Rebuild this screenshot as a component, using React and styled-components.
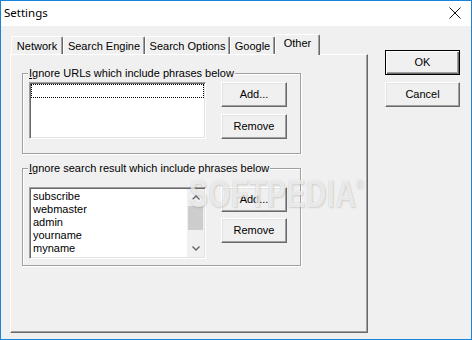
import React from "react";
import styled, { createGlobalStyle } from "styled-components";

const GlobalStyle = createGlobalStyle`
  html, body { margin: 0; padding: 0; background: #f0f0f0; }
  * { box-sizing: border-box; }
`;

const Window = styled.div`
  position: relative;
  width: 472px;
  height: 340px;
  border: 1px solid #1883d7;
  background: #f0f0f0;
  display: flex;
  flex-direction: column;
  font-family: "Liberation Sans", Arial, sans-serif;
  font-size: 11px;
  color: #000;
  overflow: hidden;
`;

const TitleBar = styled.div`
  height: 25px;
  flex: none;
  background: #fff;
  display: flex;
  align-items: center;
  justify-content: space-between;
  padding: 0 10px 0 3px;
`;

const Title = styled.span`
  font-family: "Noto Sans", "Liberation Sans", sans-serif;
  font-size: 11.5px;
  line-height: 16px;
  margin-top: -1px;
`;

const CloseIcon = styled.svg`
  width: 12px;
  height: 12px;
  display: block;
  margin-top: -2px;
`;

const Body = styled.div`
  flex: 1;
  display: flex;
  gap: 17px;
  padding: 8px 0 0 9px;
`;

const TabControl = styled.div`
  width: 358px;
  height: 299px;
  display: flex;
  flex-direction: column;
`;

const TabStrip = styled.div`
  height: 20px;
  flex: none;
  display: flex;
  align-items: flex-end;
  padding-left: 1px;
`;

const Tab = styled.div`
  position: relative;
  z-index: ${(p) => (p.$active ? 2 : 1)};
  width: ${(p) => p.$w}px;
  height: ${(p) => (p.$active ? 21 : 18)}px;
  margin-bottom: ${(p) => (p.$active ? -1 : 0)}px;
  background: #f0f0f0;
  border-top: 1px solid #fff;
  border-left: 1px solid #fff;
  border-right: 1px solid #696969;
  box-shadow: inset -1px 0 0 #a0a0a0;
  border-radius: 2px 2px 0 0;
  display: flex;
  align-items: flex-start;
  justify-content: center;
  padding-top: ${(p) => (p.$active ? 2 : 3)}px;
  line-height: 13px;
  white-space: nowrap;
`;

const Panel = styled.div`
  flex: 1;
  border-style: solid;
  border-width: 1px;
  border-color: #fff #696969 #696969 #fff;
  box-shadow: inset -1px -1px 0 #a0a0a0;
  display: flex;
  flex-direction: column;
  align-items: flex-start;
  padding: 18px 0 0 11px;
`;

const GroupBox = styled.div`
  position: relative;
  width: 279px;
  height: ${(p) => p.$h}px;
  margin-top: ${(p) => p.$mt || 0}px;
  border: 1px solid #a0a0a0;
  box-shadow: 1px 1px 0 #fff, inset 1px 1px 0 #fff;
  display: flex;
  align-items: flex-start;
  padding: ${(p) => p.$pt}px 0 0 6px;
`;

const Legend = styled.span`
  position: absolute;
  top: -7px;
  left: 5px;
  padding: 0 1px;
  line-height: 13px;
  background: #f0f0f0;
  white-space: nowrap;
`;

const Mnemonic = styled.span`
  text-decoration: underline;
  text-underline-offset: 1px;
`;

const ListBox = styled.div`
  width: 177px;
  height: ${(p) => p.$h}px;
  flex: none;
  background: #fff;
  border-style: solid;
  border-width: 1px;
  border-color: #a0a0a0 #fff #fff #a0a0a0;
  box-shadow: inset 1px 1px 0 #696969, inset -1px -1px 0 #e3e3e3;
  padding: 1px;
  display: flex;
`;

const FocusRow = styled.div`
  width: 173px;
  height: 14px;
  border: 1px dotted #000;
`;

const Items = styled.div`
  flex: 1;
  padding: 1px 0 0 2px;
`;

const Item = styled.div`
  height: 13px;
  line-height: 13px;
  white-space: nowrap;
`;

const ScrollBar = styled.div`
  width: 17px;
  flex: none;
  background: #f0f0f0;
  display: flex;
  flex-direction: column;
`;

const ScrollArrow = styled.div`
  height: 17px;
  flex: none;
  display: flex;
  align-items: center;
  justify-content: center;
`;

const Thumb = styled.div`
  height: 24px;
  margin: 0 1px;
  flex: none;
  background: #cdcdcd;
`;

const Track = styled.div`
  flex: 1;
`;

const ButtonColumn = styled.div`
  display: flex;
  flex-direction: column;
  gap: ${(p) => p.$gap}px;
  margin-left: ${(p) => p.$ml || 0}px;
  padding-top: ${(p) => p.$pt || 0}px;
`;

const Button = styled.div`
  width: ${(p) => p.$w}px;
  height: 25px;
  background: #f0f0f0;
  border: 1px solid;
  border-color: ${(p) =>
    p.$default ? "#000" : "#fff #696969 #696969 #fff"};
  box-shadow: ${(p) =>
    p.$default
      ? "inset 1px 1px 0 #fff, inset -1px -1px 0 #696969, inset -2px -2px 0 #a0a0a0"
      : "inset -1px -1px 0 #a0a0a0, inset 1px 1px 0 #e3e3e3"};
  display: flex;
  align-items: center;
  justify-content: center;
  line-height: 13px;
  padding-bottom: 1px;
`;

const Watermark = styled.div`
  position: absolute;
  left: 188px;
  top: 172px;
  font-family: "Liberation Sans", Arial, sans-serif;
  font-weight: bold;
  font-size: 38px;
  letter-spacing: 1px;
  color: rgba(255, 255, 255, 0.72);
  text-shadow: 0 0 1px rgba(0, 0, 0, 0.18), 1px 1px 2px rgba(0, 0, 0, 0.12);
  transform: scaleX(0.74);
  transform-origin: left top;
  pointer-events: none;
  white-space: nowrap;
`;

const Reg = styled.sup`
  font-size: 13px;
  font-weight: normal;
  vertical-align: top;
  position: relative;
  top: 4px;
`;

const Chevron = ({ up }) => (
  <svg width="8" height="5" viewBox="0 0 8 5">
    <path
      d={up ? "M0.5 4.5 L4 1 L7.5 4.5" : "M0.5 0.5 L4 4 L7.5 0.5"}
      fill="none"
      stroke="#606060"
      strokeWidth="1.3"
    />
  </svg>
);

const tabs = [
  { label: "Network", w: 52 },
  { label: "Search Engine", w: 82 },
  { label: "Search Options", w: 85 },
  { label: "Google", w: 45 },
  { label: "Other", w: 45, active: true },
];

const phrases = ["subscribe", "webmaster", "admin", "yourname", "myname"];

export default function App() {
  return (
    <>
      <GlobalStyle />
      <Window>
        <TitleBar>
          <Title>Settings</Title>
          <CloseIcon viewBox="0 0 12 12">
            <path d="M0.5 0.5 L11.5 11.5 M11.5 0.5 L0.5 11.5" stroke="#111" strokeWidth="1" />
          </CloseIcon>
        </TitleBar>
        <Body>
          <TabControl>
            <TabStrip>
              {tabs.map((t) => (
                <Tab key={t.label} $w={t.w} $active={t.active}>
                  {t.label}
                </Tab>
              ))}
            </TabStrip>
            <Panel>
              <GroupBox $h={81} $pt={8}>
                <Legend>
                  <Mnemonic>I</Mnemonic>gnore URLs which include phrases below
                </Legend>
                <ListBox $h={57}>
                  <FocusRow />
                </ListBox>
                <ButtonColumn $gap={7} $ml={15}>
                  <Button $w={66}>Add...</Button>
                  <Button $w={66}>Remove</Button>
                </ButtonColumn>
              </GroupBox>
              <GroupBox $h={98} $pt={18} $mt={14}>
                <Legend>
                  <Mnemonic>I</Mnemonic>gnore search result which include phrases below
                </Legend>
                <ListBox $h={72}>
                  <Items>
                    {phrases.map((p) => (
                      <Item key={p}>{p}</Item>
                    ))}
                  </Items>
                  <ScrollBar>
                    <ScrollArrow>
                      <Chevron up />
                    </ScrollArrow>
                    <Thumb />
                    <Track />
                    <ScrollArrow>
                      <Chevron />
                    </ScrollArrow>
                  </ScrollBar>
                </ListBox>
                <ButtonColumn $gap={6} $ml={15}>
                  <Button $w={66}>Add...</Button>
                  <Button $w={66}>Remove</Button>
                </ButtonColumn>
              </GroupBox>
            </Panel>
          </TabControl>
          <ButtonColumn $gap={7} $pt={16}>
            <Button $w={75} $default>
              OK
            </Button>
            <Button $w={75}>Cancel</Button>
          </ButtonColumn>
        </Body>
        <Watermark aria-hidden="true">
          SOFTPEDIA<Reg>®</Reg>
        </Watermark>
      </Window>
    </>
  );
}
